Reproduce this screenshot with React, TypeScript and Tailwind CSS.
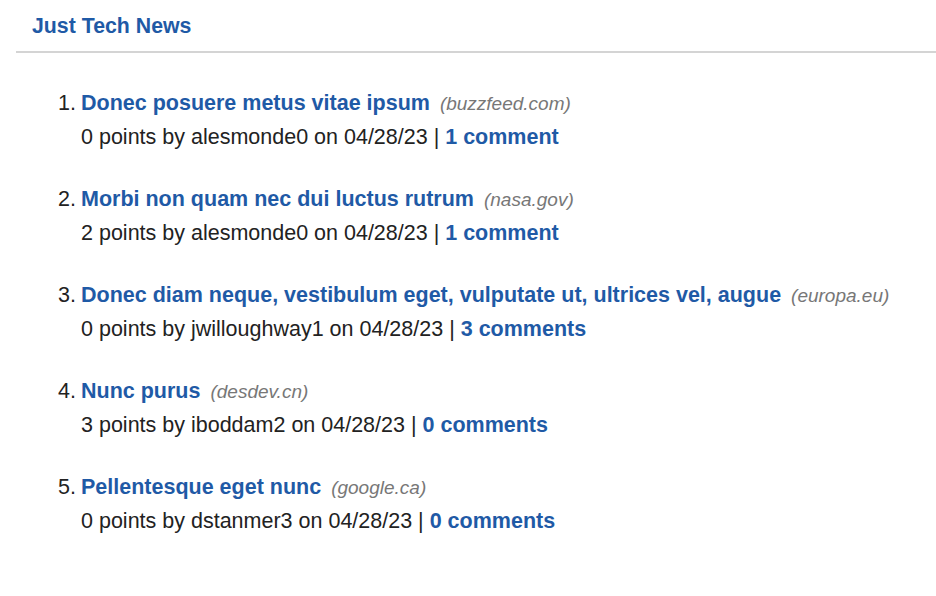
const stories = [
  { title: "Donec posuere metus vitae ipsum", site: "buzzfeed.com", points: 0, user: "alesmonde0", comments: "1 comment" },
  { title: "Morbi non quam nec dui luctus rutrum", site: "nasa.gov", points: 2, user: "alesmonde0", comments: "1 comment" },
  {
    title: "Donec diam neque, vestibulum eget, vulputate ut, ultrices vel, augue",
    site: "europa.eu",
    points: 0,
    user: "jwilloughway1",
    comments: "3 comments",
  },
  { title: "Nunc purus", site: "desdev.cn", points: 3, user: "iboddam2", comments: "0 comments" },
  { title: "Pellentesque eget nunc", site: "google.ca", points: 0, user: "dstanmer3", comments: "0 comments" },
]

export default function App() {
  return (
    <div className="min-h-screen bg-white text-[#222] font-['Liberation_Sans',Arial,sans-serif] text-[21.5px]">
      <header className="ml-4 border-b-2 border-[#d4d4d4]">
        <h1 className="pl-4 h-[51px] pt-[2px] flex items-center font-bold text-[21.3px] text-[#1f5aa6]">Just Tech News</h1>
      </header>

      <ol className="pt-[33px] pl-[52px]">
        {stories.map((s, i) => (
          <li key={i} className="flex mb-7">
            <span className="w-[24px] text-right shrink-0 leading-[34px]">{i + 1}.</span>
            <div className="pl-[5px]">
              <div className="h-[34px] leading-[34px]">
                <a href="#" className="font-bold text-[#1f5aa6]">
                  {s.title}
                </a>{" "}
                <span className="ml-[4px] italic text-[19px] leading-none text-[#777]">({s.site})</span>
              </div>
              <div className="h-[34px] leading-[34px]">
                {s.points} points by {s.user} on 04/28/23 |{" "}
                <a href="#" className="font-bold text-[#1f5aa6]">
                  {s.comments}
                </a>
              </div>
            </div>
          </li>
        ))}
      </ol>
    </div>
  )
}
